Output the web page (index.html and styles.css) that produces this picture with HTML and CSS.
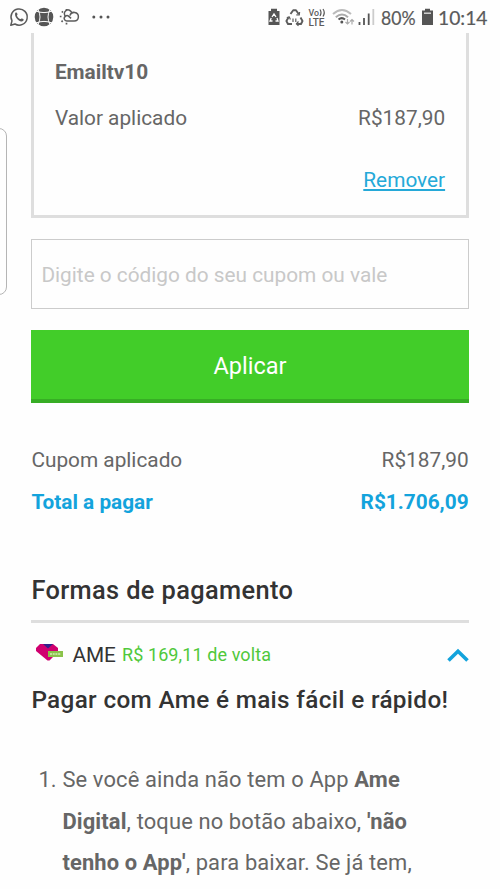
FILE: index.html
```html
<!DOCTYPE html>
<html lang="pt-BR">
<head>
<meta charset="utf-8">
<meta name="viewport" content="width=device-width">
<title>Pagamento</title>
<link rel="stylesheet" href="styles.css">
</head>
<body>
<header class="status">
  <svg class="status-left" width="120" height="33" viewBox="0 0 120 33" fill="none" stroke="#5c5c5c" stroke-width="1.5">
    <path d="M10.8 25.2 12 20.9A8.1 8.1 0 1 1 15 24Z" stroke-linejoin="round"/>
    <path d="M15.3 12.8c.8-.8 1.8-.4 2.2 1.2.2.8-.7 1.2-.5 1.8.5 1.5 1.8 2.8 3.1 3.3.8.2 1.2-.9 2-.6 1.7.7 2 1.3 1.3 2.1-3 3.2-9.9-3.6-8.1-7.8Z" fill="#5c5c5c" stroke="none"/>
    <circle cx="44" cy="17" r="9.300" fill="#555" stroke="none"/>
    <path d="M36 11q8 3.200 16 0M36 23q8-3.200 16 0M38 9.500q4 7.500 0 15M50 9.500q-4 7.500 0 15" stroke="#fefefe" stroke-width="1"/>
    <path d="M66.200 16.800a3.700 3.700 0 1 1 5.500-3.700M67 21h7.200a4.300 4.300 0 1 0-4.300-5.300M67 21a2.700 2.700 0 1 1 1.800-4.600l2.300 1.900"/>
    <path d="M66.500 9v1.500M61.800 11.300l1.200 1.200M59.800 16.500h1.700M61.500 21.800l1.200-1.200M66.500 22.800v1.700" stroke-width="1.700"/>
    <g fill="#555" stroke="none"><circle cx="93.800" cy="17" r="1.500"/><circle cx="101" cy="17" r="1.500"/><circle cx="108" cy="17" r="1.500"/></g>
  </svg>
  <svg class="status-icons" width="108" height="33" viewBox="268 0 108 33" fill="none">
    <path d="M268.500 11h2.500V8.800h6V11h2.500v14h-11Z" fill="#555"/>
    <path d="m272 17 2-3 2 3m1 1 1 3h-2.500m-3 0H270l1.200-3" stroke="#fff" stroke-width="1.300"/>
    <g stroke="#5c5c5c" stroke-width="1.900" stroke-linejoin="round"><path d="m290.500 14 2.700-3.800h2.800l2.800 4M300.500 17.500l2 3.500-1.500 3h-4M292 24h-4l-1.600-3 2.200-3.700"/><path d="m296.300 14.800 3 .2.300-3M298.500 21.500l-2.200 2.400 2.200 2M286.800 17.800l2.400-1 1.200 2.600M293 18.500v3.500M295.800 18.500v3.500" stroke-width="1.200"/></g>
    <g class="lte"><text x="308.500" y="15.500" textLength="10.500" lengthAdjust="spacingAndGlyphs" font-size="9">Vo</text><text x="308.500" y="25.500" textLength="16" lengthAdjust="spacingAndGlyphs" font-size="10">LTE</text></g>
    <path d="M320 9.500q2 3 0 6.500M323 9q2.500 3.500 0 7.500" stroke="#555" stroke-width="1.200"/>
    <g stroke-width="2"><path d="M333 14q9-8 18 0" stroke="#bbb"/><path d="M335.800 17.200q6.200-5.500 12.200 0" stroke="#aaa"/><path d="M338.500 19.500q3.300-2.700 6.500 0" stroke="#555"/></g>
    <circle cx="341.800" cy="22" r="1.500" fill="#555"/>
    <path d="M347.500 19v5m-2-2 2 2 2-2M352 24.500v-5m-2 2 2-2 2 2" stroke="#aaa" stroke-width="1.200"/>
    <path d="M359.500 22v3M364 18v7M368.700 13.500V25" stroke="#555" stroke-width="1.800"/>
    <path d="M373.300 9v16" stroke="#ccc" stroke-width="1.800"/>
  </svg>
  <svg class="status-right" width="118" height="33" viewBox="378 0 118 33">
    <g class="clock"><text x="381" y="24.500" textLength="34.500" lengthAdjust="spacingAndGlyphs">80%</text><text x="438" y="24.500" textLength="49.500" lengthAdjust="spacingAndGlyphs">10:14</text></g>
    <path d="M422 10.500h3V8.800h5v1.700h3V25h-11Z" fill="#555"/><path d="M424 13.200h7" stroke="#ddd" stroke-width="1.400"/>
  </svg>
</header>
<div class="edge-handle"></div>
<main>
  <section class="coupon">
    <strong class="code">Emailtv10</strong>
    <div class="row"><span>Valor aplicado</span><span>R$187,90</span></div>
    <a class="remove">Remover</a>
  </section>
  <div class="field">Digite o código do seu cupom ou vale</div>
  <div class="apply">Aplicar</div>
  <section class="totals">
    <div class="row"><span>Cupom aplicado</span><span>R$187,90</span></div>
    <div class="row total"><span>Total a pagar</span><span>R$1.706,09</span></div>
  </section>
  <h2>Formas de pagamento</h2>
  <div class="method">
    <svg class="gem" width="30" height="22" viewBox="0 0 30 22"><path d="M4 1h13l5 4v4l-8.500 8.500h-2L0 8V5Z" fill="#d0006f"/><path d="M7 1h10l-5 4.500Z" fill="#33208b"/><path d="M12 8h15v6H12Z" fill="#8bc34a"/><path d="M14 11h11" stroke="#d4edb3" stroke-width="1.600" stroke-dasharray="2 .7"/></svg>
    <span class="name">AME</span><span class="cashback">R$ 169,11 de volta</span>
    <svg class="chevron" width="22" height="16" viewBox="0 0 22 16"><path d="m1.500 13.500 9.500-9.300 9.500 9.300" fill="none" stroke="#13a3dc" stroke-width="3.600"/></svg>
  </div>
  <h3>Pagar com Ame é mais fácil e rápido!</h3>
  <div class="step"><span class="num">1.</span><p>Se você ainda não tem o App <b>Ame<br>Digital</b>, toque no botão abaixo, <b>'não<br>tenho o App'</b>, para baixar. Se já tem,</p></div>
</main>
</body>
</html>
```
FILE: styles.css
```css
* { box-sizing: border-box; }
html, body { height: 889px; overflow: hidden; }
body { margin: 0; background: #fefefe; color: #666; font: 20.8px/42px Roboto, "Liberation Sans", sans-serif; }
.status { display: flex; height: 33px; }
.status svg { display: block; flex: none; }
.status-icons { margin-left: 148px; }
.status-right { margin-left: 2px; }
.lte { font-family: Roboto, sans-serif; font-weight: 500; fill: #5c5c5c; }
.clock { font: 19.5px Lato, sans-serif; fill: #5a5a5a; stroke: #5a5a5a; stroke-width: .2px; }
.edge-handle { position: absolute; left: -12px; top: 128px; width: 19px; height: 167px; border: 1px solid #b5b5b5; border-radius: 8px; }
main { padding: 0 31.400px; }
.coupon { height: 185px; border: solid #dedede; border-width: 0 3px 3px; padding: 18px 20.500px 0; }
.code { display: block; }
.row { display: flex; justify-content: space-between; }
.coupon .row { margin-top: 4px; }
.remove { display: block; width: fit-content; margin: 20px 0 0 auto; color: #25a9d8; text-decoration: underline; text-decoration-thickness: 2px; text-underline-offset: 2px; text-decoration-skip-ink: none; }
.field { height: 70px; margin-top: 21px; border: 1.500px solid #ccc; padding-left: 9px; line-height: 71px; color: #c8c8c8; }
.apply { height: 73px; margin-top: 21px; background: #42cd29; border-bottom: 4px solid #37ad25; color: #fff; font-size: 23.500px; line-height: 72px; text-align: center; }
.totals { margin-top: 36px; }
.total { color: #13a3dc; font-weight: 700; }
h2 { height: 54px; margin: 46px 0 0; border-bottom: 3px solid #dedede; color: #333; font-size: 25.400px; font-weight: 500; letter-spacing: .36px; line-height: 42px; }
h2, h3 { white-space: nowrap; }
.method { display: flex; align-items: center; height: 42px; margin-top: 11px; color: #333; }
.gem { margin: -2px 6px 0 5px; }
.cashback { margin-left: 6px; color: #4fc83b; font-size: 18px; letter-spacing: .1px; }
.chevron { margin-left: auto; }
h3 { margin: 3px 0 0; color: #333; font-size: 24.300px; font-weight: 500; letter-spacing: .34px; line-height: 42px; }
.step { display: flex; margin: 38px 0 0 7px; line-height: 41.500px; font-size: 21.900px; letter-spacing: .14px; white-space: nowrap; }
.num { width: 24px; }
.step p { margin: 0; }
```
